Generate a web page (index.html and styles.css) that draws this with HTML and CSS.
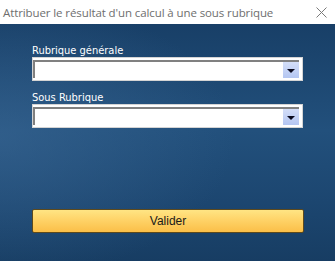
FILE: index.html
```html
<!DOCTYPE html>
<html lang="fr">
<head>
  <meta charset="UTF-8">
  <title>Attribuer le résultat d'un calcul à une sous rubrique</title>
  <link rel="stylesheet" href="styles.css">
</head>
<body>

  <!-- Barre de titre -->
  <div class="titlebar">
    <span class="title">Attribuer le résultat d'un calcul à une sous rubrique</span>
    <svg class="close" width="11" height="11" viewBox="0 0 11 11">
      <path d="M0.5 0.5 L10.5 10.5 M10.5 0.5 L0.5 10.5" stroke="#7a7a7a" stroke-width="1" fill="none"/>
    </svg>
  </div>

  <!-- Formulaire -->
  <div class="panel">
    <label class="field-label">Rubrique générale</label>
    <div class="combo">
      <div class="combo-text"></div>
      <div class="combo-btn"><span class="arrow"></span></div>
    </div>

    <label class="field-label second">Sous Rubrique</label>
    <div class="combo">
      <div class="combo-text"></div>
      <div class="combo-btn"><span class="arrow"></span></div>
    </div>

    <button class="validate">Valider</button>
  </div>

</body>
</html>
```

FILE: styles.css
```css
body {
  margin: 0;
  padding: 0;
  width: 335px;
  height: 261px;
  overflow: hidden;
  display: flex;
  flex-direction: column;
  font-family: 'Liberation Sans', Arial, sans-serif;
}

.titlebar {
  height: 24px;
  background: #fff;
  display: flex;
  align-items: center;
  justify-content: space-between;
  padding: 0 8px 0 3px;
  flex-shrink: 0;
}

.title {
  font-family: 'Open Sans', 'Noto Sans', sans-serif;
  font-size: 11.5px;
  color: #6e6e6e;
  letter-spacing: -0.1px;
}

.close { margin-top: 1px; }

.panel {
  flex: 1;
  display: flex;
  flex-direction: column;
  padding: 20px 32px 0 32px;
  background:
    radial-gradient(ellipse 70% 60% at 0% 48%, rgba(60, 105, 150, 0.55), rgba(60, 105, 150, 0) 100%),
    linear-gradient(to bottom, #183f67 0%, #22507c 45%, #1c4670 75%, #173d63 100%);
}

.field-label {
  color: #fff;
  font-family: 'DejaVu Sans Condensed', 'DejaVu Sans', sans-serif;
  font-size: 11px;
  line-height: 13px;
  height: 13px;
}

.field-label.second { margin-top: 10px; }

.combo {
  height: 24px;
  margin-top: 0;
  box-sizing: border-box;
  background: #fff;
  border: 1px solid #d4d4d4;
  display: flex;
  padding: 2px 3px 2px 0;
}

.combo-text {
  flex: 1;
  border-top: 2px solid #808080;
  border-left: 2px solid #808080;
  background: #fff;
}

.combo-btn {
  width: 16px;
  background: linear-gradient(to bottom, #d4def8, #b4c6f2);
  display: flex;
  align-items: center;
  justify-content: center;
  border-top: 2px solid #808080;
  box-sizing: border-box;
}

.arrow {
  width: 0;
  height: 0;
  border-left: 4px solid transparent;
  border-right: 4px solid transparent;
  border-top: 4px solid #0a0a1e;
  margin-top: 1px;
}

.validate {
  margin-top: 81px;
  height: 24px;
  width: 272px;
  border: 1px solid #5e4a1c;
  border-radius: 2px;
  background: linear-gradient(to bottom, #ffe584 0%, #fed165 50%, #fbbf48 100%);
  font-family: 'Liberation Sans', Arial, sans-serif;
  font-size: 12px;
  color: #1a1a1a;
  padding: 0;
  cursor: pointer;
}
```
